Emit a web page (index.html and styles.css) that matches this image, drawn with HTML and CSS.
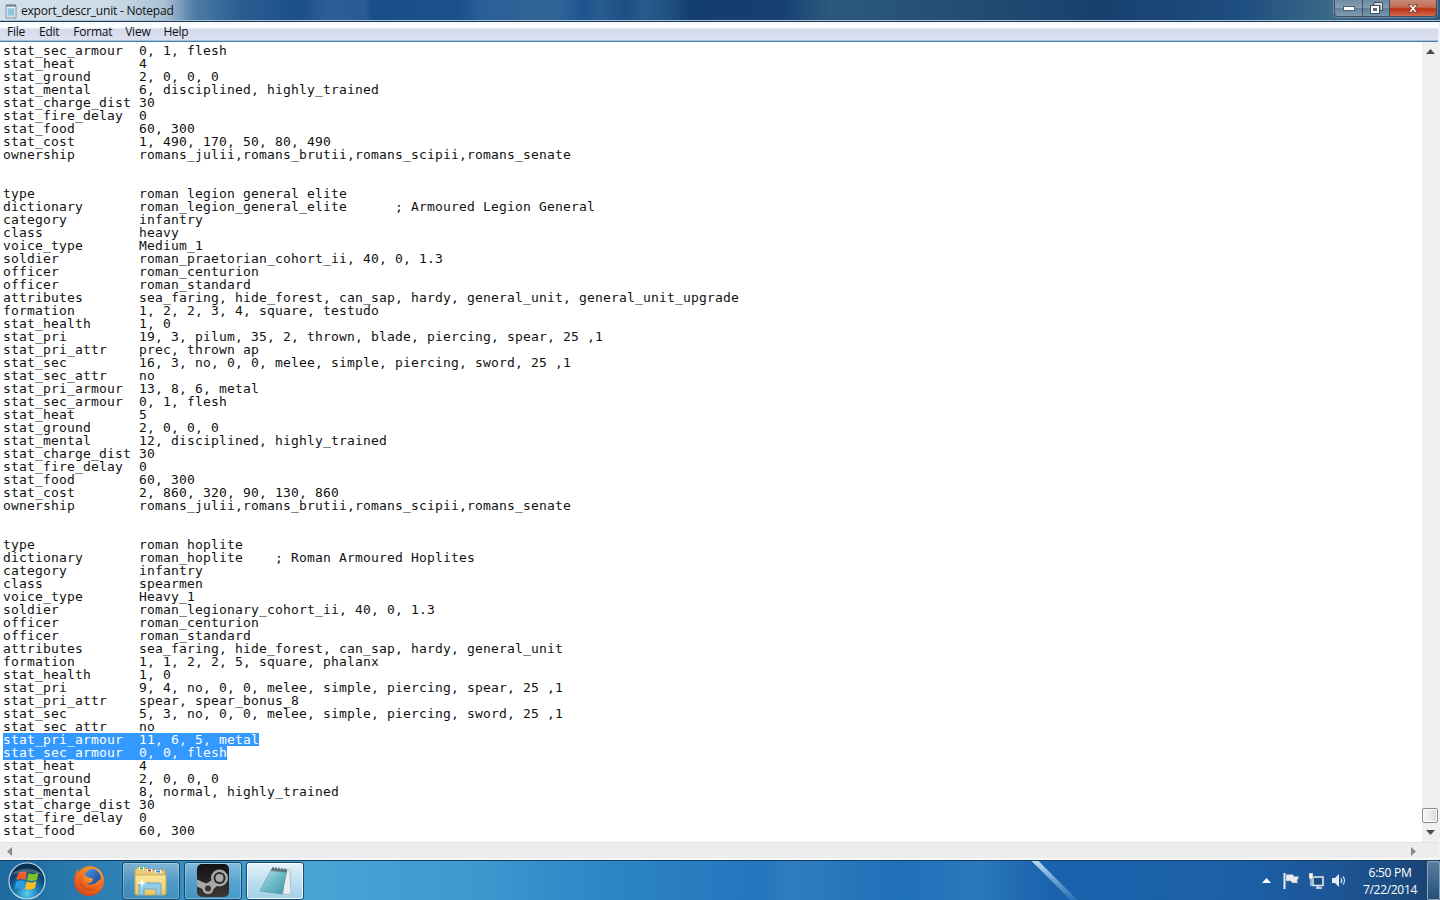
FILE: index.html
```html
<!DOCTYPE html>
<html lang="en">
<head>
<meta charset="utf-8">
<title>export_descr_unit - Notepad</title>
<link rel="stylesheet" href="styles.css">
</head>
<body>
<div class="screen">
  <header class="titlebar">
    <svg class="app-icon" width="16" height="16" viewBox="0 0 16 16">
      <path d="M3 2.500h10v12.500H3z" fill="#e8f1f6" stroke="#7f8f9e"/>
      <path d="M4.500 5h7v8.500h-7z" fill="#a9d3e6"/>
      <path d="M4 1v3M6 1v3M8 1v3M10 1v3M12 1v3" stroke="#5d6d7d" stroke-width="1"/>
      <path d="M5 7h6M5 9h6M5 11h6" stroke="#7fb0c8"/>
    </svg>
    <span class="title-text">export_descr_unit - Notepad</span>
    <div class="caption">
      <div class="cap cap-min">
        <svg width="12" height="5" viewBox="0 0 12 5"><rect x=".5" y=".5" width="11" height="4" fill="#fff" stroke="#50606e"/></svg>
      </div>
      <div class="cap cap-max">
        <svg width="13" height="12" viewBox="0 0 13 12"><path d="M4 .5h8.500v8H10V3.500H4z" fill="#d8e0e6" stroke="#3c4c5a"/><path d="M.5 3.500H9.500V11.500H.5z" fill="#fff" stroke="#3c4c5a"/><rect x="3" y="6" width="4" height="3" fill="#5a6b78"/></svg>
      </div>
      <div class="cap cap-close">
        <svg width="14" height="11" viewBox="0 0 14 11"><path d="M2.500 1.500h2.500L7 3.800 9 1.500h2.500L8.500 5.500l3 4H9L7 7.200 5 9.500H2.500l3-4z" fill="#fff" stroke="#5b3028" stroke-width=".8"/></svg>
      </div>
    </div>
  </header>

  <div class="window">
    <nav class="menubar">
      <span class="menu-item menu-file">File</span>
      <span class="menu-item menu-edit">Edit</span>
      <span class="menu-item menu-format">Format</span>
      <span class="menu-item menu-view">View</span>
      <span class="menu-item">Help</span>
    </nav>

    <div class="body-row">
      <pre class="text">stat_sec_armour  0, 1, flesh
stat_heat        4
stat_ground      2, 0, 0, 0
stat_mental      6, disciplined, highly_trained
stat_charge_dist 30
stat_fire_delay  0
stat_food        60, 300
stat_cost        1, 490, 170, 50, 80, 490
ownership        romans_julii,romans_brutii,romans_scipii,romans_senate


type             roman legion general elite
dictionary       roman_legion_general_elite      ; Armoured Legion General
category         infantry
class            heavy
voice_type       Medium_1
soldier          roman_praetorian_cohort_ii, 40, 0, 1.3
officer          roman_centurion
officer          roman_standard
attributes       sea_faring, hide_forest, can_sap, hardy, general_unit, general_unit_upgrade
formation        1, 2, 2, 3, 4, square, testudo
stat_health      1, 0
stat_pri         19, 3, pilum, 35, 2, thrown, blade, piercing, spear, 25 ,1
stat_pri_attr    prec, thrown ap
stat_sec         16, 3, no, 0, 0, melee, simple, piercing, sword, 25 ,1
stat_sec_attr    no
stat_pri_armour  13, 8, 6, metal
stat_sec_armour  0, 1, flesh
stat_heat        5
stat_ground      2, 0, 0, 0
stat_mental      12, disciplined, highly_trained
stat_charge_dist 30
stat_fire_delay  0
stat_food        60, 300
stat_cost        2, 860, 320, 90, 130, 860
ownership        romans_julii,romans_brutii,romans_scipii,romans_senate


type             roman hoplite
dictionary       roman_hoplite    ; Roman Armoured Hoplites
category         infantry
class            spearmen
voice_type       Heavy_1
soldier          roman_legionary_cohort_ii, 40, 0, 1.3
officer          roman_centurion
officer          roman_standard
attributes       sea_faring, hide_forest, can_sap, hardy, general_unit
formation        1, 1, 2, 2, 5, square, phalanx
stat_health      1, 0
stat_pri         9, 4, no, 0, 0, melee, simple, piercing, spear, 25 ,1
stat_pri_attr    spear, spear_bonus_8
stat_sec         5, 3, no, 0, 0, melee, simple, piercing, sword, 25 ,1
stat_sec_attr    no
<span class="sel sel-first">stat_pri_armour  11, 6, 5, metal</span>
<span class="sel sel-last">stat_sec_armour  0, 0, flesh</span>
stat_heat        4
stat_ground      2, 0, 0, 0
stat_mental      8, normal, highly_trained
stat_charge_dist 30
stat_fire_delay  0
stat_food        60, 300</pre>
      <div class="vscroll">
        <svg class="arrow" width="9" height="5" viewBox="0 0 9 5"><path d="M4.500 0L9 5H0z" fill="#4d4d4d"/></svg>
        <div class="thumb"></div>
        <svg class="arrow arrow-down" width="9" height="5" viewBox="0 0 9 5"><path d="M0 0h9L4.500 5z" fill="#4d4d4d"/></svg>
      </div>
    </div>

    <div class="hscroll">
      <svg width="5" height="9" viewBox="0 0 5 9"><path d="M5 0v9L0 4.500z" fill="#8a8a8a"/></svg>
      <svg width="5" height="9" viewBox="0 0 5 9"><path d="M0 0v9l5-4.500z" fill="#8a8a8a"/></svg>
    </div>
  </div>

  <footer class="taskbar">
    <svg class="orb" width="40" height="40" viewBox="0 0 40 40">
      <defs>
        <radialGradient id="orbFill" cx="50%" cy="85%" r="70%">
          <stop offset="0" stop-color="#5fd0f0"/>
          <stop offset=".45" stop-color="#1a7db8"/>
          <stop offset="1" stop-color="#0b2f52"/>
        </radialGradient>
      </defs>
      <circle cx="20" cy="20" r="18" fill="url(#orbFill)" stroke="#bcd6e4" stroke-width="1.200"/>
      <path d="M11 13c3-3 6-3 9-1.500L18.500 19c-3-1.500-6-1.500-9.500 0z" fill="#ee5a28"/>
      <path d="M21.500 12c2.500 1.500 6 1.500 10-.5L30 18.500c-3.500 2-6.500 2-10 .5z" fill="#7cc02c"/>
      <path d="M9 20.500c3-1.500 6-1.500 9 0L16.500 28c-3-1.500-6-1.500-9 .5z" fill="#2f9ae0"/>
      <path d="M19.500 20.500c3 1.500 6 1.500 10-.5L28 27c-4 2-7 2-10 1z" fill="#f9bd1c"/>
      <path d="M4 15C8 6 30 5 36 15 28 10 12 10 4 15z" fill="#fff" opacity=".22"/>
    </svg>
    <svg class="firefox" width="32" height="32" viewBox="0 0 32 32">
      <defs>
        <radialGradient id="foxBody" cx="60%" cy="30%" r="80%">
          <stop offset="0" stop-color="#fbb53a"/>
          <stop offset=".55" stop-color="#f2711f"/>
          <stop offset="1" stop-color="#c8391a"/>
        </radialGradient>
        <linearGradient id="foxGlobe" x1="0" y1="0" x2="1" y2="1">
          <stop offset="0" stop-color="#4a9ae2"/>
          <stop offset="1" stop-color="#1c3f94"/>
        </linearGradient>
      </defs>
      <path d="M6 2c-1 2-1 3-.5 5C8 4 12 1 16.500 1 24.500 1 31 7.500 31 16s-6.500 15-15 15S1 24.500 1 16c0-5 2-10 5-14z" fill="url(#foxBody)"/>
      <ellipse cx="19" cy="12.500" rx="9" ry="8.500" fill="url(#foxGlobe)"/>
      <path d="M8 10c2-3 5-5 8-5-2 1-4 3-4 5 1 3 6 2 8 4 0 3-4 5-7 4 3 3 8 2 11-1 2-2 3-3 5-3 0 5-5 12-12 12-7 0-12-6-11-13z" fill="url(#foxBody)"/>
      <path d="M22 2.500c4 1.500 8 6 8.500 12-2-3-3.500-7-8.500-12z" fill="#f8ab2c"/>
    </svg>

    <div class="task-btn">
      <svg width="34" height="30" viewBox="0 0 34 30">
        <defs>
          <linearGradient id="folderFill" x1="0" y1="0" x2="0" y2="1">
            <stop offset="0" stop-color="#fbe79c"/>
            <stop offset="1" stop-color="#eac765"/>
          </linearGradient>
        </defs>
        <path d="M1 4.500C1 3 2 2 3 2h9l2 2h15c1.500 0 2 1 2 2v5H1z" fill="#e8cb78" stroke="#c5a556"/>
        <rect x="5" y="1" width="5" height="3" fill="#fff"/><rect x="6" y="1.500" width="3" height="2" fill="#35ac3c"/>
        <rect x="13" y="3" width="5" height="3" fill="#fff"/><rect x="14" y="3.500" width="3" height="2" fill="#c5352b"/>
        <rect x="21" y="4" width="6" height="3" fill="#fff"/><rect x="22" y="4.500" width="4" height="2" fill="#2d8bd0"/>
        <path d="M1 9h31v18c0 1-1 2-2 2H3c-1 0-2-1-2-2z" fill="url(#folderFill)" stroke="#c8a85c"/>
        <path d="M5 29V19c0-1.500 1-2 2-2h18c1.500 0 2 1 2 2v10h-5v-6H10v6z" fill="#8fcde8" stroke="#6ba8c8"/>
        <path d="M8 12l1 4 4 1-4 1-1 4-1-4-4-1 4-1z" fill="#fff"/>
      </svg>
    </div>
    <div class="task-btn">
      <svg width="32" height="33" viewBox="0 0 32 33">
        <defs>
          <linearGradient id="steamBg" x1="0" y1="0" x2="0" y2="1">
            <stop offset="0" stop-color="#121212"/>
            <stop offset="1" stop-color="#3d3834"/>
          </linearGradient>
        </defs>
        <rect width="32" height="33" rx="5" fill="url(#steamBg)"/>
        <path d="M0 15.500L9 19.500 6.500 25.500 0 22.500z" fill="#a8a8a8"/>
        <path d="M15 16l6 5-8.500 7.500-6-7z" fill="#a8a8a8"/>
        <circle cx="22.500" cy="14" r="8.500" fill="#a8a8a8"/>
        <circle cx="22.500" cy="14" r="6" fill="#2a2826"/>
        <circle cx="22.500" cy="14" r="4" fill="#a8a8a8"/>
        <circle cx="11" cy="24.500" r="5.500" fill="#a8a8a8"/>
        <circle cx="11" cy="24.500" r="3" fill="#38342f"/>
      </svg>
    </div>
    <div class="task-btn task-active">
      <svg width="34" height="32" viewBox="0 0 34 32">
        <defs>
          <linearGradient id="padFill" x1="0" y1="0" x2="1" y2="1">
            <stop offset="0" stop-color="#c3edf0"/>
            <stop offset=".5" stop-color="#6dbcc9"/>
            <stop offset="1" stop-color="#3f96ab"/>
          </linearGradient>
        </defs>
        <path d="M27 4l5 1 1 24-8 .5z" fill="#e8eef0" stroke="#9aa7ad" stroke-width=".6"/>
        <path d="M14 3.500L29 5 24 29 2 26z" fill="url(#padFill)" stroke="#5a8b98" stroke-width=".6"/>
        <path d="M14 3.500L29 5l-.5 2.500L12.500 6z" fill="#6f7f86"/>
        <path d="M15 2v3M18 2v3M21 2.500v3M24 3v3M27 3.500v3" stroke="#3d484e"/>
      </svg>
    </div>

    <div class="tray">
      <svg class="tray-up" width="9" height="5" viewBox="0 0 9 5"><path d="M4.500 0L9 5H0z" fill="#fff"/></svg>
      <svg class="tray-icon" width="17" height="16" viewBox="0 0 17 16"><path d="M1.500 0v16" stroke="#e8eef4" stroke-width="2"/><path d="M3 1.500h7l1 2h5L14 8l1 2H9L8 8H3z" fill="#e8eef4" stroke="#7d8a96" stroke-width=".5"/></svg>
      <svg class="tray-icon" width="16" height="16" viewBox="0 0 16 16"><path d="M5 4h10v8.500H5zM8 15h6" fill="#1a4f80" stroke="#e8eef4" stroke-width="1.500"/><path d="M10 12.500V15" stroke="#e8eef4" stroke-width="1.500"/><rect x="1" y="0" width="4" height="6" fill="#fff" stroke="#55626e" stroke-width=".5"/><path d="M3 6v7" stroke="#e8eef4" stroke-width="1.200"/></svg>
      <svg class="tray-icon tray-last" width="15" height="15" viewBox="0 0 15 15"><path d="M0 5h3l4-4v13l-4-4H0z" fill="#e8eef4"/><path d="M9 5c1 1.500 1 3.500 0 5M11 3.500c2 2 2 6 0 8" fill="none" stroke="#dfe8ef" stroke-width="1.100"/></svg>
      <div class="clock"><span>6:50 PM</span><span>7/22/2014</span></div>
    </div>
    <div class="show-desktop"></div>
  </footer>
</div>
</body>
</html>
```

FILE: styles.css
```css
html, body {
  margin: 0;
  padding: 0;
  overflow: hidden;
}

.screen {
  width: 1440px;
  height: 900px;
  display: flex;
  flex-direction: column;
  overflow: hidden;
}

/* Title bar */
.titlebar {
  flex: 0 0 22px;
  box-sizing: border-box;
  height: 22px;
  display: flex;
  align-items: flex-start;
  padding-left: 3px;
  border-bottom: 1px solid #1b3a58;
  box-shadow: inset 0 -1px 0 #a8bed2;
  background: linear-gradient(90deg,
    #d3e0ea 0, #cddce8 110px, #a9c0d3 165px, #4d7ba3 195px, #2a5e91 240px, #1b4f8a 300px,
    #2c5d94 325px, #2a5c93 365px, #184e8a 372px, #1a508c 460px, #2a6098 480px,
    #2f6496 540px, #2e6496 560px, #1d5390 585px, #2a5e92 600px, #1b4f85 625px,
    #295b8d 645px, #20507f 670px, #143e6f 690px, #163f70 780px, #1e4a78 800px,
    #2c587f 830px, #214a72 1000px, #17406e 1100px, #1e4d80 1240px, #3a6a88 1330px, #2d5a7e 1440px);
}

.app-icon {
  margin-top: 3px;
  flex: none;
}

.title-text {
  margin-left: 2px;
  font: 12px/22px "Open Sans", "Liberation Sans", sans-serif;
  letter-spacing: -0.22px;
  color: #111;
}

.caption {
  margin-left: auto;
  margin-right: 3px;
  display: flex;
  height: 17px;
  box-sizing: border-box;
  border: 1px solid #3d4f60;
  border-top: 0;
  border-radius: 0 0 4px 4px;
  overflow: hidden;
  box-shadow: 0 0 0 1px rgba(255, 255, 255, 0.25);
}

.cap {
  display: flex;
  align-items: center;
  justify-content: center;
  height: 100%;
  border-right: 1px solid #3d4f60;
  box-sizing: border-box;
}

.cap-min {
  width: 28px;
  background: linear-gradient(#6f8ea6, #87a0b3 50%, #64849c 52%, #7e9cb0);
}

.cap-max {
  width: 27px;
  background: linear-gradient(#6a8aa2, #82a0b2 50%, #5e7e96 52%, #7898ac);
}

.cap-close {
  width: 46px;
  border-right: 0;
  background: linear-gradient(#c78a78, #c46a52 45%, #bd3015 55%, #d16a4e);
}

/* Window */
.window {
  flex: 1;
  min-height: 0;
  display: flex;
  flex-direction: column;
  background: #eef1f7;
  padding: 0 2px 0 0;
}

.menubar {
  flex: 0 0 20px;
  box-sizing: border-box;
  height: 20px;
  display: flex;
  padding-left: 7px;
  border-bottom: 1px solid #3585ba;
  box-shadow: inset 0 -1px 0 #b3bdd2;
  background: linear-gradient(#f6f8fc 0, #ffffff 5px, #f4f6fb 6px, #d5dbed 7px, #dbe1f1 18px);
  font: 12px/19px "Open Sans", "Liberation Sans", sans-serif;
  letter-spacing: -0.25px;
  color: #111;
}

.menu-file { margin-right: 14px; }
.menu-edit { margin-right: 14px; }
.menu-format { margin-right: 13px; }
.menu-view { margin-right: 13px; }

.body-row {
  flex: 1;
  min-height: 0;
  display: flex;
}

.text {
  flex: 1;
  min-width: 0;
  margin: 0;
  padding: 2px 0 0 3px;
  background: #fff;
  overflow: hidden;
  font-family: "DejaVu Sans Mono", "Liberation Mono", monospace;
  font-size: 13px;
  line-height: 13px;
  letter-spacing: 0.174px;
  color: #111;
}

.sel {
  display: inline-block;
  height: 13px;
  line-height: 13px;
  vertical-align: top;
  background: #3399ff;
  color: #fff;
}

/* Keeps the first row's underscores above the next row's highlight */
.sel-first {
  position: relative;
  z-index: 1;
}

.sel-last {
  box-shadow: 0 1px 0 #3399ff;
}

.vscroll {
  flex: 0 0 16px;
  display: flex;
  flex-direction: column;
  align-items: center;
  background: #f0f0f0;
  box-sizing: border-box;
  padding-top: 7px;
}

.arrow {
  flex: none;
}

.thumb {
  flex: none;
  width: 16px;
  height: 15px;
  box-sizing: border-box;
  margin-top: 754px;
  border: 1px solid #8b8b8b;
  border-radius: 2px;
  background: linear-gradient(90deg, #f5f5f5, #ededed 50%, #d4d4d4);
  box-shadow: inset 0 0 0 1px #fff;
}

.arrow-down {
  margin-top: 7px;
}

.hscroll {
  flex: 0 0 18px;
  box-sizing: border-box;
  height: 18px;
  display: flex;
  justify-content: space-between;
  align-items: flex-start;
  padding: 4px 22px 0 7px;
  background: #ededed;
  border-top: 1px solid #e2e2e2;
  border-bottom: 2px solid #f6f8fa;
}

/* Taskbar */
.taskbar {
  flex: 0 0 40px;
  box-sizing: border-box;
  height: 40px;
  display: flex;
  align-items: center;
  position: relative;
  border-top: 1px solid #173c5c;
  background: linear-gradient(90deg, #1e6a9f 0, #2e80b4 110px, #47a5d6 310px, #3d98cf 480px, #2d86c6 600px, #2476bd 760px, #2f7cc0 790px, #2070b8 900px, #2b78bd 980px, #1a62ad 1050px, #1c60a8 1240px, #1d5696 1330px, #1b4c82 1400px, #173f6c 1440px);
}

.taskbar::after {
  content: "";
  position: absolute;
  left: 1051px;
  top: 0;
  width: 7px;
  height: 39px;
  transform: skewX(45deg);
  background: linear-gradient(rgba(220, 238, 248, 0.85), rgba(170, 215, 240, 0.55) 50%, rgba(150, 205, 235, 0.15));
}

.orb {
  flex: none;
  margin-left: 7px;
}

.firefox {
  flex: none;
  margin-left: 26px;
}

.task-btn {
  flex: none;
  box-sizing: border-box;
  width: 58px;
  height: 38px;
  margin-left: 4px;
  display: flex;
  align-items: center;
  justify-content: center;
  border: 1px solid #18496e;
  border-radius: 3px;
  background: linear-gradient(rgba(255, 255, 255, 0.38), rgba(255, 255, 255, 0.12) 55%, rgba(255, 255, 255, 0.05));
  box-shadow: inset 0 0 0 1px rgba(255, 255, 255, 0.25);
}

.firefox + .task-btn {
  margin-left: 17px;
}

.task-active {
  background: linear-gradient(#e6f3fa, #bfdff0 50%, #a0d0e8);
  box-shadow: inset 0 0 0 1px rgba(255, 255, 255, 0.85);
}

.tray {
  margin-left: auto;
  display: flex;
  align-items: center;
  color: #fff;
}

.tray-up { flex: none; margin-right: 12px; }
.tray-icon { flex: none; margin-right: 8px; }
.tray-last { margin-right: 6px; }

.clock {
  width: 74px;
  box-sizing: border-box;
  display: flex;
  flex-direction: column;
  align-items: center;
  font: 12px/17px "Open Sans", "Liberation Sans", sans-serif;
  letter-spacing: -0.3px;
}

.show-desktop {
  flex: none;
  width: 13px;
  height: 39px;
  box-sizing: border-box;
  border: 1px solid #8ca3b8;
  border-radius: 1px;
  background: linear-gradient(#587ea0, #254f7a);
}
```
